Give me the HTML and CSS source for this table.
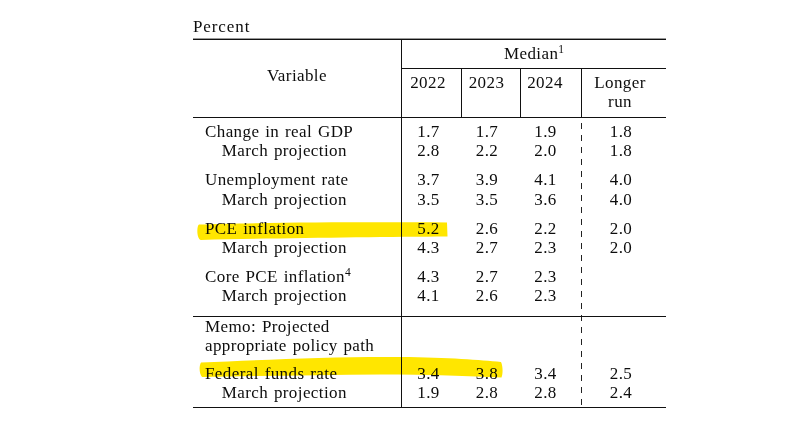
FILE: index.html
```html
<!DOCTYPE html>
<html lang="en">
<head>
<meta charset="utf-8">
<title>Economic projections — Percent</title>
<link rel="stylesheet" href="styles.css">
</head>
<body>
<div class="page">
  <div class="doc">
    <p class="unit">Percent</p>
    <table class="proj">
      <colgroup>
        <col class="w-var"><col class="w-c1"><col class="w-c2"><col class="w-c3"><col class="w-c4">
      </colgroup>
      <thead>
        <tr>
          <th rowspan="2" class="var-head">Variable</th>
          <th colspan="4" class="median">Median<sup>1</sup></th>
        </tr>
        <tr class="years">
          <th class="c1 ruled">2022</th>
          <th class="c2 ruled">2023</th>
          <th class="c3 ruled">2024</th>
          <th class="c4">Longer<br>run</th>
        </tr>
      </thead>
      <tbody>
        <tr class="lead top"><td class="var">Change in real GDP</td><td class="c1">1.7</td><td class="c2">1.7</td><td class="c3">1.9</td><td class="c4">1.8</td></tr>
        <tr><td class="var sub">March projection</td><td class="c1">2.8</td><td class="c2">2.2</td><td class="c3">2.0</td><td class="c4">1.8</td></tr>
        <tr class="lead"><td class="var">Unemployment rate</td><td class="c1">3.7</td><td class="c2">3.9</td><td class="c3">4.1</td><td class="c4">4.0</td></tr>
        <tr><td class="var sub">March projection</td><td class="c1">3.5</td><td class="c2">3.5</td><td class="c3">3.6</td><td class="c4">4.0</td></tr>
        <tr class="lead"><td class="var">PCE inflation</td><td class="c1">5.2</td><td class="c2">2.6</td><td class="c3">2.2</td><td class="c4">2.0</td></tr>
        <tr><td class="var sub">March projection</td><td class="c1">4.3</td><td class="c2">2.7</td><td class="c3">2.3</td><td class="c4">2.0</td></tr>
        <tr class="lead"><td class="var">Core PCE inflation<sup>4</sup></td><td class="c1">4.3</td><td class="c2">2.7</td><td class="c3">2.3</td><td class="c4"></td></tr>
        <tr class="section-end"><td class="var sub">March projection</td><td class="c1">4.1</td><td class="c2">2.6</td><td class="c3">2.3</td><td class="c4"></td></tr>
        <tr class="memo"><td class="var">Memo: Projected<br>appropriate policy path</td><td class="c1"></td><td class="c2"></td><td class="c3"></td><td class="c4"></td></tr>
        <tr class="lead fed"><td class="var">Federal funds rate</td><td class="c1">3.4</td><td class="c2">3.8</td><td class="c3">3.4</td><td class="c4">2.5</td></tr>
        <tr class="last"><td class="var sub">March projection</td><td class="c1">1.9</td><td class="c2">2.8</td><td class="c3">2.8</td><td class="c4">2.4</td></tr>
      </tbody>
    </table>
    <svg class="marks" width="791" height="432" viewBox="0 0 791 432" aria-hidden="true">
      <path d="M199,224.5 C250,222.5 360,222 447,222.5 L447.5,236.5 C380,237 280,238 201,240 C196.5,239 196.5,226 199,224.5 Z"/>
      <path d="M201,362.5 C260,360 330,356.5 400,357 C450,357.5 480,360 501,362 C503,366 503,374 501.5,377.5 C470,376 430,374.5 380,374.5 C320,375 260,376 202,377 C199,373 199,366 201,362.5 Z"/>
    </svg>
  </div>
</div>
</body>
</html>
```

FILE: styles.css
```css
html, body {
  margin: 0;
  padding: 0;
  background: #ffffff;
}

.page {
  width: 791px;
  height: 432px;
  overflow: hidden;
}

.doc {
  position: relative;
  padding: 17px 0 0 193px;
  font-family: "Liberation Serif", "Times New Roman", serif;
  font-size: 17px;
  color: #0d0d0d;
  letter-spacing: 0.4px;
  word-spacing: 1.2px;
}

.unit {
  margin: 0 0 2.7px 0;
  line-height: 19.3px;
  letter-spacing: 0.9px;
}

.proj {
  table-layout: fixed;
  width: 473px;
  border-collapse: separate;
  border-spacing: 0;
  border-top: 1px solid #111;
  border-bottom: 1px solid #111;
  box-shadow: 0 -1px 0 #9a9a9a;
  background-image: linear-gradient(to bottom, #222 0, #222 6px, transparent 6px, transparent 12px);
  background-size: 1px 12px;
  background-repeat: repeat-y;
  background-position: 388px 83px;
}

.w-var { width: 209px; }
.w-c1 { width: 60px; }
.w-c2 { width: 59px; }
.w-c3 { width: 61px; }
.w-c4 { width: 84px; }

th, td {
  padding: 0;
  font-weight: normal;
  line-height: 19.3px;
  vertical-align: top;
  text-align: center;
}

thead th {
  background: #ffffff;
}

.var-head {
  padding-top: 26px;
  border-right: 1px solid #111;
  border-bottom: 1px solid #111;
}

.median {
  padding: 4px 0 4.7px;
  border-bottom: 1px solid #111;
}

.years th {
  padding-top: 4px;
  padding-bottom: 5.4px;
  border-bottom: 1px solid #111;
}

.years th.ruled {
  border-right: 1px solid #111;
}

sup {
  font-size: 11.5px;
  line-height: 0;
  vertical-align: 6px;
  letter-spacing: 0;
}

.var {
  text-align: left;
  padding-left: 12px;
  border-right: 1px solid #111;
  white-space: nowrap;
}

.var.sub {
  padding-left: 28.7px;
}

.c1 { padding-right: 7px; }
.c2 { padding-right: 9px; }
.c3 { padding-right: 12px; }
.c4 { padding-right: 6px; }

.years th.c4 {
  padding-right: 8px;
}

tbody .lead td {
  padding-top: 9.7px;
}

tbody .lead.top td {
  padding-top: 4px;
}

tbody .section-end td {
  padding-bottom: 10.5px;
}

tbody .memo td {
  border-top: 1px solid #111;
}

tbody .lead.fed td {
  padding-top: 8.4px;
}

tbody .last td {
  padding-bottom: 4.4px;
}

.marks {
  position: absolute;
  left: 0;
  top: 0;
  pointer-events: none;
  mix-blend-mode: multiply;
}

.marks path {
  fill: #ffe600;
}
```
